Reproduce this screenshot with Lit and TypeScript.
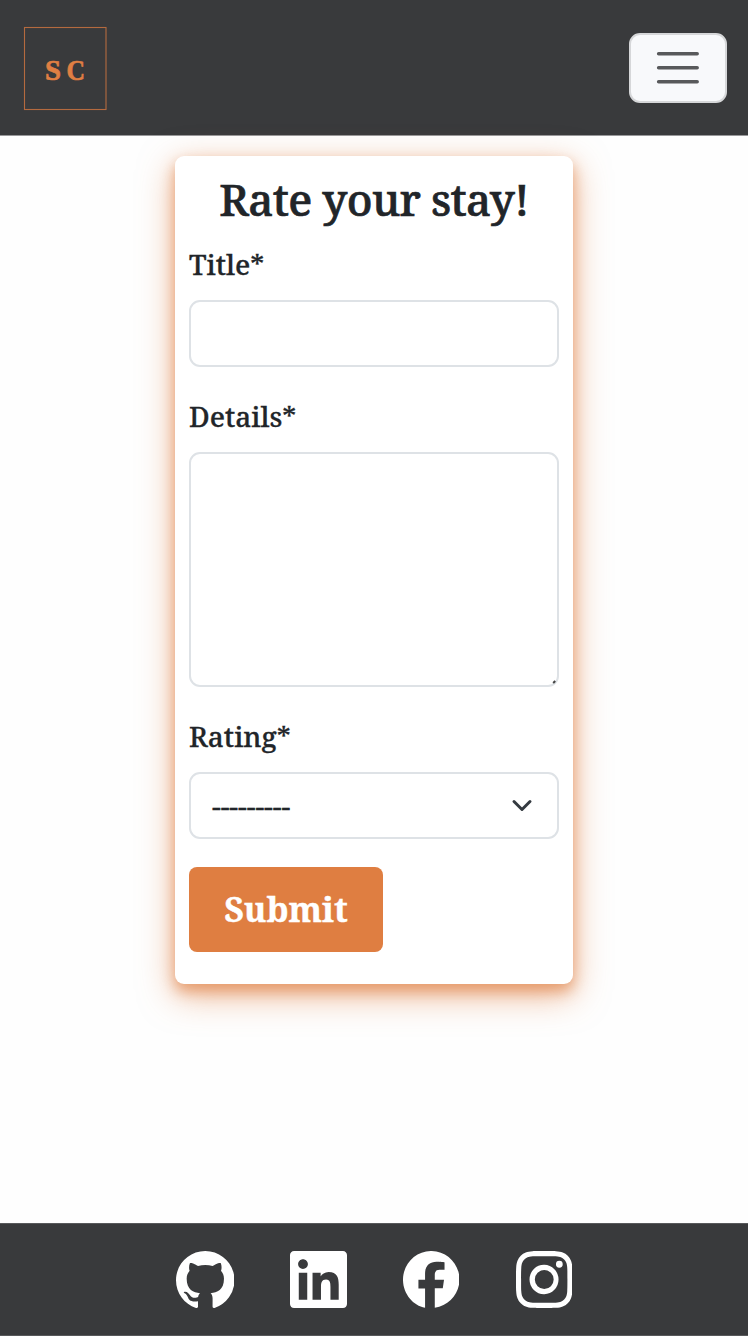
import { LitElement, html, css, svg } from "lit";
import { customElement } from "lit/decorators.js";

const icons = [
  {
    name: "GitHub",
    cls: "github",
    box: "0 0 16 15.6",
    path: "M8 0C3.58 0 0 3.58 0 8c0 3.54 2.29 6.53 5.47 7.59.4.07.55-.17.55-.38 0-.19-.01-.82-.01-1.49-2.01.37-2.53-.49-2.69-.94-.09-.23-.48-.94-.82-1.13-.28-.15-.68-.52-.01-.53.63-.01 1.08.58 1.23.82.72 1.21 1.87.87 2.33.66.07-.52.28-.87.51-1.07-1.78-.2-3.64-.89-3.64-3.95 0-.87.31-1.59.82-2.15-.08-.2-.36-1.02.08-2.12 0 0 .67-.21 2.2.82.64-.18 1.32-.27 2-.27s1.36.09 2 .27c1.53-1.04 2.2-.82 2.2-.82.44 1.1.16 1.92.08 2.12.51.56.82 1.27.82 2.15 0 3.07-1.87 3.75-3.65 3.95.29.25.54.73.54 1.48 0 1.07-.01 1.93-.01 2.2 0 .21.15.46.55.38A8.01 8.01 0 0 0 16 8c0-4.42-3.58-8-8-8",
  },
  {
    name: "LinkedIn",
    cls: "linkedin",
    box: "0 32 448 448",
    path: "M416 32H31.9C14.3 32 0 46.5 0 64.3v383.4C0 465.5 14.3 480 31.9 480H416c17.6 0 32-14.5 32-32.3V64.3c0-17.8-14.4-32.3-32-32.3zM135.4 416H69V202.2h66.5V416zm-33.2-243c-21.3 0-38.5-17.3-38.5-38.5S80.9 96 102.2 96c21.2 0 38.5 17.3 38.5 38.5 0 21.3-17.2 38.5-38.5 38.5zm282.1 243h-66.4V312c0-24.8-.5-56.7-34.5-56.7-34.6 0-39.9 27-39.9 54.9V416h-66.4V202.2h63.7v29.2h.9c8.9-16.8 30.6-34.5 62.2-34.5 66.5 0 78.9 43.8 78.9 100.9V416z",
  },
  {
    name: "Facebook",
    cls: "facebook",
    box: "0 0 16 16",
    path: "M16 8.049c0-4.446-3.582-8.05-8-8.05C3.58 0-.002 3.603-.002 8.05c0 4.017 2.926 7.347 6.25 7.9v-5.42h-1.88V8.05h1.88V6.375c0-2.217 1.295-3.331 3.222-3.331.876 0 2.291.157 2.291.157v2.08h-1.409c-.993 0-1.353.621-1.353 1.258v1.51h2.618l-.354 2.426H9v5.475c4.024-.604 7-3.934 7-7.951",
  },
  {
    name: "Instagram",
    cls: "instagram",
    box: "0 0 16 16",
    path: "M8 0C5.829 0 5.556.01 4.703.048 3.85.088 3.269.222 2.76.42a3.9 3.9 0 0 0-1.417.923A3.9 3.9 0 0 0 .42 2.76C.222 3.268.087 3.85.048 4.7.01 5.555 0 5.827 0 8.001c0 2.172.01 2.444.048 3.297.04.852.174 1.433.372 1.942.205.526.478.972.923 1.417.444.445.89.719 1.416.923.51.198 1.09.333 1.942.372C5.555 15.99 5.827 16 8 16s2.444-.01 3.298-.048c.851-.04 1.434-.174 1.943-.372a3.9 3.9 0 0 0 1.416-.923c.445-.445.718-.891.923-1.417.197-.509.332-1.09.372-1.942C15.99 10.445 16 10.173 16 8s-.01-2.445-.048-3.299c-.04-.851-.175-1.433-.372-1.941a3.9 3.9 0 0 0-.923-1.417A3.9 3.9 0 0 0 13.24.42c-.51-.198-1.092-.333-1.943-.372C10.443.01 10.172 0 7.998 0zm-.717 1.442h.718c2.136 0 2.389.007 3.232.046.78.035 1.204.166 1.486.275.373.145.64.319.92.599s.453.546.598.92c.11.281.24.705.275 1.485.039.843.047 1.096.047 3.231s-.008 2.389-.047 3.232c-.035.78-.166 1.203-.275 1.485a2.5 2.5 0 0 1-.599.919c-.28.28-.546.453-.92.598-.28.11-.704.24-1.485.276-.843.038-1.096.047-3.232.047s-2.39-.009-3.233-.047c-.78-.036-1.203-.166-1.485-.276a2.5 2.5 0 0 1-.92-.598 2.5 2.5 0 0 1-.6-.92c-.109-.281-.24-.705-.275-1.485-.038-.843-.046-1.096-.046-3.233s.008-2.388.046-3.231c.036-.78.166-1.204.276-1.486.145-.373.319-.64.599-.92s.546-.453.92-.598c.282-.11.705-.24 1.485-.276.738-.034 1.024-.044 2.515-.045zm4.988 1.328a.96.96 0 1 0 0 1.92.96.96 0 0 0 0-1.92m-4.27 1.122a4.109 4.109 0 1 0 0 8.217 4.109 4.109 0 0 0 0-8.217m0 1.441a2.667 2.667 0 1 1 0 5.334 2.667 2.667 0 0 1 0-5.334",
  },
];

@customElement("app-root")
export class AppRoot extends LitElement {
  static styles = css`
    :host {
      display: flex;
      flex-direction: column;
      height: 1336px;
      box-sizing: border-box;
      background: #fefefe;
      color: #212529;
      font-family: "Noto Serif", "DejaVu Serif Condensed", "DejaVu Serif", serif;
      font-size: 28px;
    }
    * {
      box-sizing: border-box;
    }
    svg {
      display: block;
    }
    .header {
      display: flex;
      justify-content: space-between;
      align-items: flex-start;
      height: 136px;
      flex: none;
      padding: 26px 21px 0 23px;
      background: #393a3c;
      border-bottom: 1px solid #98989a;
    }
    .menu {
      display: grid;
      place-items: center;
      width: 98.5px;
      height: 70.5px;
      margin-top: 6.5px;
      padding: 0;
      background: #f8f9fb;
      border: 2px solid #d6d7d9;
      border-radius: 11px;
    }
    .main {
      flex: 1;
      padding-top: 19.5px;
    }
    .card {
      display: flex;
      flex-direction: column;
      align-items: stretch;
      width: 398px;
      height: 828.5px;
      margin: 0 auto;
      padding: 0 14px;
      background: #fff;
      border-radius: 9px;
      box-shadow:
        0 7px 14px rgba(223, 126, 65, 0.6),
        0 10.5px 35px rgba(223, 126, 65, 0.57);
    }
    .title {
      height: 88.5px;
      margin: 0;
      line-height: 86px;
      text-align: center;
      font-size: 44px;
      font-weight: 500;
      letter-spacing: -0.65px;
      -webkit-text-stroke: 0.7px #212529;
      white-space: nowrap;
    }
    .label {
      height: 40px;
      line-height: 40px;
      font-weight: 500;
      -webkit-text-stroke: 0.3px #212529;
    }
    .field {
      width: 370px;
      margin: 0;
      background: #fff;
      border: 2px solid #dee2e6;
      border-radius: 11px;
      outline: none;
      font: inherit;
    }
    .input {
      height: 67px;
      margin: 16px 0 29px;
    }
    .area {
      display: flex;
      justify-content: flex-end;
      align-items: flex-end;
      height: 235.5px;
      margin: 15.5px 0 29px;
    }
    .select {
      display: flex;
      justify-content: space-between;
      align-items: center;
      height: 67px;
      margin: 16px 0 28px;
      padding: 0 24px 0 21px;
    }
    .dashes {
      padding-bottom: 2px;
      -webkit-text-stroke: 0.5px #212529;
    }
    .submit {
      width: 194px;
      height: 85px;
      padding: 0 0 1px;
      color: #fff;
      background: #df7e41;
      border: 0;
      border-radius: 8px;
      font: bold 34px / 84px "Noto Serif", "DejaVu Serif Condensed", "DejaVu Serif", serif;
      -webkit-text-stroke: 0.4px #fff;
    }
    .footer {
      display: flex;
      align-items: flex-start;
      flex: none;
      height: 113px;
      padding: 27px 0 0 175.7px;
      background: #393a3c;
      border-top: 1px solid #58595b;
      border-bottom: 1px solid #58595b;
    }
    .icon {
      height: 57px;
      fill: #fff;
    }
    .github {
      width: 58.5px;
      margin-right: 56px;
    }
    .linkedin {
      width: 57px;
      margin-right: 55.7px;
    }
    .facebook {
      width: 56.5px;
      margin-right: 56.3px;
    }
    .instagram {
      width: 56.5px;
    }
  `;

  render() {
    return html`
      <header class="header">
        <svg class="logo" width="85" height="85" viewBox="23 26 85 85" fill="#e07f43">
          <rect x="24.5" y="27.5" width="81.5" height="82" fill="none" stroke="#b46a3f" stroke-width="1.1" />
          <g font-family="'Liberation Serif', serif" font-weight="bold" font-size="29" stroke="#e07f43" stroke-width="0.7">
            <text x="45" y="79.5" textLength="16" lengthAdjust="spacingAndGlyphs">S</text>
            <text x="66.5" y="79.5" textLength="18.5" lengthAdjust="spacingAndGlyphs">C</text>
          </g>
        </svg>
        <button class="menu" aria-label="Menu">
          <svg width="44" height="36" viewBox="0 0 44 36" stroke="#58595b" stroke-width="3.5" stroke-linecap="round">
            <path d="M2.6 3.8H41.2M2.6 17.8H41.2M2.6 31.8H41.2" />
          </svg>
        </button>
      </header>
      <main class="main">
        <form class="card">
          <h1 class="title">Rate your stay!</h1>
          <label class="label">Title*</label>
          <div class="field input"></div>
          <label class="label">Details*</label>
          <div class="field area">
            <svg width="6" height="6" viewBox="0 0 6 6"><path d="M2.2 4 4.2 2" stroke="#444" stroke-width="2" /></svg>
          </div>
          <label class="label">Rating*</label>
          <div class="field select">
            <span class="dashes">---------</span>
            <svg width="22" height="14" viewBox="0 0 22 14" fill="none" stroke="#343a40" stroke-width="3" stroke-linecap="round" stroke-linejoin="round">
              <path d="M3 2.5 11 10.5 19 2.5" />
            </svg>
          </div>
          <button class="submit" type="button">Submit</button>
        </form>
      </main>
      <footer class="footer">
        ${icons.map(
          (i) => html`<svg class="icon ${i.cls}" viewBox=${i.box} preserveAspectRatio="none" aria-label=${i.name}>
            ${svg`<path d=${i.path} />`}
          </svg>`
        )}
      </footer>
    `;
  }
}
